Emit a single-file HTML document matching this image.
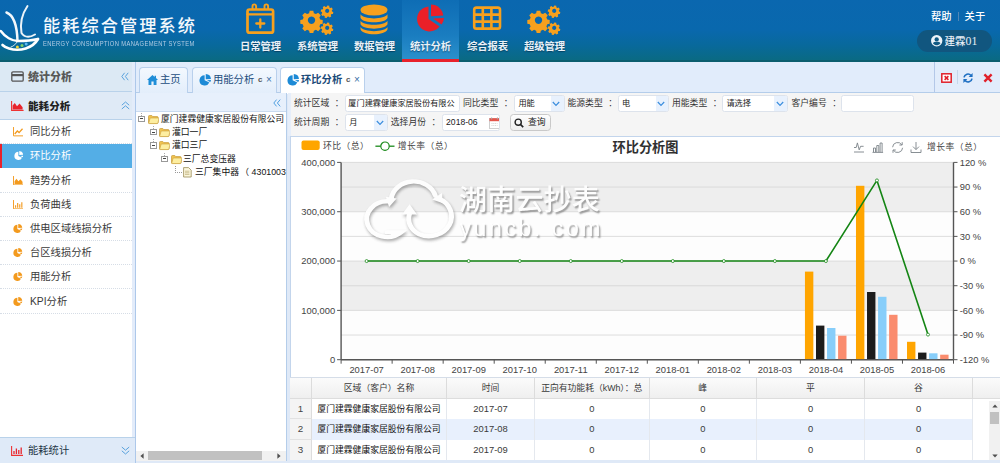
<!DOCTYPE html>
<html lang="zh-CN">
<head>
<meta charset="utf-8">
<title>能耗综合管理系统</title>
<style>
*{box-sizing:border-box;margin:0;padding:0}
html,body{width:1000px;height:463px;overflow:hidden;background:#fff}
body{font-family:"Liberation Sans","Noto Sans CJK SC",sans-serif;font-size:8.8px;color:#333;position:relative}
.abs{position:absolute}
#app{position:absolute;left:0;top:0;width:1000px;height:463px;overflow:hidden;background:#dfe9f7}
/* header */
#hdr{position:absolute;left:0;top:0;width:1000px;height:62px;background:linear-gradient(#0a67af 0%,#0968ad 50%,#08699c 75%,#0a6a83 100%);border-bottom:2px solid #0b5d6e}
#title{position:absolute;left:43px;top:14px;color:#f4f8fc;font-size:17.2px;letter-spacing:2.05px;white-space:nowrap;line-height:24px;font-weight:500}
#subtitle{position:absolute;left:43px;top:38.6px;color:#b4cde3;font-size:7.4px;letter-spacing:0.5px;white-space:nowrap;line-height:10px;font-family:"Liberation Sans",sans-serif;transform-origin:0 0;transform:scaleX(.782)}
.nav{position:absolute;top:0;width:57px;height:60px;text-align:center}
.nav.on{background:linear-gradient(#0e6db5 0%,#1a7dc0 60%,#2a90cc 100%);border-bottom:3px solid #e8212b;height:62px}
.nav svg{position:absolute;left:0;top:0}
.nav span{position:absolute;left:-10px;right:-10px;top:39.5px;line-height:14px;font-size:10.3px;font-weight:bold;color:#e9f1f8;white-space:nowrap;text-shadow:0 1px 1px rgba(0,40,70,.6)}
#help{position:absolute;left:931px;top:10px;font-size:10.3px;color:#fff;line-height:14px;white-space:nowrap;font-weight:500}
#help i{display:inline-block;width:1px;height:9px;background:#4f86b6;margin:0 6px 0 6px;vertical-align:-1px}
#user{position:absolute;left:917px;top:30px;width:75px;height:22px;border-radius:11px;background:#11567f;color:#e6eef5;font-size:10.6px;line-height:22px;white-space:nowrap}
#user span{position:absolute;left:27.6px;top:0;font-size:10.5px;font-weight:500}
#user span b{font-family:"Liberation Serif",serif;font-size:11.8px;font-weight:normal}
/* sidebar */
#side{position:absolute;left:0;top:62px;width:136px;height:401px;background:linear-gradient(90deg,#fff 0,#fff 132px,#e3ecfa 132px);border-right:1px solid #adc8ea}
.sh{position:absolute;left:0;width:132px;background:#dbe8f3;border-bottom:1px solid #b9d2ea;font-weight:bold;color:#444}
.sh b{position:absolute;left:28px;top:1px;font-size:11px;white-space:nowrap}
.si{position:absolute;left:0;width:132px;height:24.2px;border-bottom:1px dotted #d6dde6;font-size:10.3px;line-height:23.6px;color:#3a3a3a}
.si span{position:absolute;left:30px;top:0;white-space:nowrap}
.si.on{background:#54aee6;color:#fff;border-left:2px solid #e8212b;border-bottom:none}
.si svg{position:absolute;left:12px;top:6.5px}
/* tabs */
#tabs{position:absolute;left:136px;top:62px;width:864px;height:31px;background:#e1ecfb;border-bottom:1px solid #b4cdea}
.tab{position:absolute;top:5px;height:26px;border:1px solid #b9d0ec;border-bottom:none;border-radius:4px 4px 0 0;background:linear-gradient(#f3f8fe,#e3eefb);font-size:10.3px;line-height:24px;color:#1d4d7c;white-space:nowrap}
.tab.on{background:#fff;height:27px;font-weight:bold;color:#1b4a78}
.tab span{position:absolute;top:0}
.tab svg{position:absolute}
.tab em{position:absolute;top:0;font-style:normal;font-size:8px;color:#555;font-weight:bold}

/* tree */
#tree{position:absolute;left:136px;top:93px;width:151px;height:368px;background:#fff;border-right:1px solid #b4cdea}
#treehd{position:absolute;left:0;top:0;width:150px;height:19px;background:#e7f0fc;border-bottom:1px solid #c9daef}
#treebody{position:absolute;left:0;top:19px;width:150px;height:339px;overflow:hidden}
.tr{position:absolute;left:0;height:13.2px;width:150px;line-height:13.2px;font-size:8.8px;color:#111;white-space:nowrap}
.tr span{position:absolute;top:0}
.tr .ex{position:absolute;top:3px;width:6.6px;height:6.2px;border:1px solid #999;background:#fff}
.tr .ex:after{content:"";position:absolute;left:1px;top:1.5px;width:2.6px;height:1px;background:#444}
.tr .ex:before{content:"";position:absolute;left:1.7px;top:-4px;height:3px;border-left:1px dotted #aaa}
.tr .ln{position:absolute;left:39px;top:0;width:7px;height:7px;border-left:1px dotted #999;border-bottom:1px dotted #999}
.tr .fo{position:absolute;top:1px;width:11px;height:11px}
#hscroll{position:absolute;left:0;top:358px;width:150px;height:10px;background:#f1f1f1}
/* filter */
#filter{position:absolute;left:288px;top:93px;width:712px;height:43px;background:#f5f5f5;border-left:3px solid #e6eefa}
#filter label{position:absolute;font-size:8.8px;line-height:15px;color:#333;white-space:nowrap}
#filter label u{text-decoration:none;margin-left:5.6px;margin-right:-5.6px}
.inp{position:absolute;height:17.3px;border:1px solid #dde3ec;border-radius:2.5px;background:#fff;font-size:8.2px;line-height:15.3px;color:#222;white-space:nowrap;overflow:hidden}
.inp span{position:absolute;left:3px;top:0}
.inp.sel svg{position:absolute;right:3.4px;top:5.2px;width:8px;height:6px}
.inp.sel i{position:absolute;right:0;top:0;width:12.5px;height:100%;background:#e8f1fd}
#qbtn{position:absolute;left:219px;top:20.8px;width:41.3px;height:17.6px;border:1px solid #c9c9c9;border-radius:3.5px;background:linear-gradient(#fdfdfd,#eeeeee);font-size:8.8px;line-height:15.5px;color:#222}
#qbtn span{position:absolute;left:17px;top:0;white-space:nowrap}

/* chart */
#chartp{position:absolute;left:290px;top:135.5px;width:710px;height:241px;background:#fff;border-left:1px solid #c3d5ec;border-top:1px solid #c3d5ec;overflow:hidden}
#chartp>svg#chart{left:0!important;top:-0.5px!important}
#wm{position:absolute;left:0;top:0;width:400px;height:120px;opacity:.92}
.wmt{position:absolute;color:#fff;white-space:nowrap;font-weight:500;text-shadow:1.5px 2px 1.5px rgba(90,90,90,.6)}
/* grid */
#grid{position:absolute;left:290px;top:377px;width:710px;height:83px;background:#fff;overflow:hidden;border-top:1px solid #d5dde8}
#ghd{position:absolute;left:0;top:0;width:710px;height:21px;background:linear-gradient(#fbfbfb,#efefef);border-bottom:1px solid #ddd}
#ghd .gc{line-height:21.5px;height:21px;border-right:1px solid #dcdcdc;color:#3a3a3a}
.gr{position:absolute;left:0;width:683px;height:20.7px;background:#fff}
.gr.alt{background:#e8f0fd}
.gc{position:absolute;top:0;height:20.7px;line-height:20.2px;text-align:center;font-size:8.8px;white-space:nowrap;border-right:1px solid #e4e8ee;overflow:hidden;color:#111}
.gr .gc{font-size:9.4px;color:#3a3a3a}
.gr .gc.cj{font-size:8.8px;color:#111}
.gc.gn{font-size:9.8px!important;color:#444;font-family:"Liberation Sans",sans-serif;background:#f4f4f4;border-right:1px solid #ddd;border-bottom:1px solid #e2e2e2}
#vscroll{position:absolute;left:699px;top:23px;width:11px;height:60px;background:#f1f1f1}
</style>
</head>
<body>
<div id="app">

<!-- ================= HEADER ================= -->
<div id="hdr">
  <svg class="abs" style="left:0;top:0" width="42" height="60" viewBox="0 0 42 60">
    <g fill="none" stroke="#fff" stroke-linecap="round">
      <path d="M6.5 12.5 C13 15,17 24,17.5 41" stroke-width="2.5" opacity=".95"/>
      <path d="M27.5 6 C22 14,20 24,21.5 33 C24 37,29 38,35 34.5" stroke-width="2" opacity=".92"/>
      <path d="M0.8 31 C5 37,12 41,18 41 C25 41,32 40.5,38 39" stroke-width="2.4"/>
      <path d="M38 39 C33 48,20 52,9 48.5 C6 47.5,3.5 46,2.5 45" stroke-width="2.6"/>
      <path d="M17.5 41 C16 44,14 46,11 47" stroke-width="1" opacity=".8"/>
    </g>
    <circle cx="17.4" cy="46.9" r="1.5" fill="#f4d63a"/>
    <circle cx="22" cy="45.5" r="1.5" fill="#7fd36a"/>
    <circle cx="26.2" cy="44" r="1.5" fill="#5db8f0"/>
  </svg>
  <div id="title">能耗综合管理系统</div>
  <div id="subtitle">ENERGY CONSUMPTION MANAGEMENT SYSTEM</div>

  <div class="nav" style="left:232px">
    <svg width="57" height="40" viewBox="0 0 57 40"><g fill="none" stroke="#f7a01d" stroke-width="2.7" stroke-linejoin="round" stroke-linecap="round"><rect x="15.5" y="9.5" width="25.6" height="23.2" rx="2"/><path d="M20.5 9 V6.2 a1.8 1.8 0 0 1 3.6 0 V9 M32.5 9 V6.2 a1.8 1.8 0 0 1 3.6 0 V9" stroke-width="1.9"/><path d="M15.5 14.3 H41" stroke-width="2.2"/><path d="M28.3 19.5 v8 M24.3 23.5 h8" stroke-width="2.3"/></g></svg>
    <span>日常管理</span></div>
  <div class="nav" style="left:289px">
    <svg width="57" height="40" viewBox="0 0 57 40"><use href="#gears"/></svg>
    <span>系统管理</span></div>
  <div class="nav" style="left:346px">
    <svg width="57" height="40" viewBox="0 0 57 40"><g fill="#f7a01d"><ellipse cx="28" cy="10" rx="13.5" ry="5.6"/><path d="M14.5 14.3 c3 5.5,24 5.5,27 0 v3.6 c-3 5.8,-24 5.8,-27 0z"/><path d="M14.5 20.7 c3 5.5,24 5.5,27 0 v3.6 c-3 5.8,-24 5.8,-27 0z"/><path d="M14.5 27.1 c3 5.5,24 5.5,27 0 v2.2 c-2 6.6,-25 6.6,-27 0z"/></g></svg>
    <span>数据管理</span></div>
  <div class="nav on" style="left:402px">
    <svg width="57" height="40" viewBox="0 0 57 40"><g fill="#ea2028"><path d="M26.5 6.5 A12.5 12.5 0 1 0 37.5 26.5 L26.5 19z"/><path d="M29 4.5 A12.5 12.5 0 0 1 41.3 15.6 L29 16.2z"/><path d="M31 18.6 L42 18 A12.5 12.5 0 0 1 39.6 24.6z"/></g></svg>
    <span>统计分析</span></div>
  <div class="nav" style="left:459px">
    <svg width="57" height="40" viewBox="0 0 57 40"><g fill="none" stroke="#f7a01d" stroke-width="2.6"><rect x="15.2" y="7.6" width="25.8" height="21" rx="2.2"/><path d="M15 14.6 H41 M15 21.6 H41 M23.8 8 V28.5 M32.4 8 V28.5"/></g></svg>
    <span>综合报表</span></div>
  <div class="nav" style="left:516px">
    <svg width="57" height="40" viewBox="0 0 57 40"><use href="#gears"/></svg>
    <span>超级管理</span></div>

  <div id="help">帮助<i></i>关于</div>
  <div id="user">
    <svg class="abs" style="left:14.3px;top:5.3px" width="11.4" height="11.4" viewBox="0 0 10 10"><circle cx="5" cy="5" r="5" fill="#eef4f9"/><circle cx="5" cy="3.9" r="1.9" fill="#115a83"/><path d="M1.7 7.2 C2.6 5.6,7.4 5.6,8.3 7.2 C7.2 8.6,6.2 9,5 9 C3.8 9,2.8 8.6,1.7 7.2z" fill="#115a83"/></svg>
    <span>建霖<b>01</b></span>
  </div>
</div>

<svg width="0" height="0" style="position:absolute">
  <defs>
    <g id="gear1"><path fill="#f7a01d" fill-rule="evenodd" d="M-1.9 -10 h3.8 l.6 2.6 l2.2 .9 l2.3 -1.4 l2.7 2.7 l-1.4 2.3 l.9 2.2 l2.6 .6 v3.8 l-2.6 .6 l-.9 2.2 l1.4 2.3 l-2.7 2.7 l-2.3 -1.4 l-2.2 .9 l-.6 2.6 h-3.8 l-.6 -2.6 l-2.2 -.9 l-2.3 1.4 l-2.7 -2.7 l1.4 -2.3 l-.9 -2.2 l-2.6 -.6 v-3.8 l2.6 -.6 l.9 -2.2 l-1.4 -2.3 l2.7 -2.7 l2.3 1.4 l2.2 -.9z M0 -3.9 a3.9 3.9 0 1 0 .01 0z"/></g>
    <g id="gears">
      <use href="#gear1" transform="translate(22.5 20.2) scale(.95)"/>
      <use href="#gear1" transform="translate(38.2 10.8) scale(.53) rotate(12)"/>
      <use href="#gear1" transform="translate(38.2 27.8) scale(.53) rotate(12)"/>
    </g>
  </defs>
</svg>

<!-- ================= SIDEBAR ================= -->
<div id="side">
  <div class="sh" style="top:0;height:29.5px;line-height:28.5px;background:#dce9f4;color:#585858">
    <svg class="abs" style="left:11px;top:9px" width="13" height="11" viewBox="0 0 13 11"><rect x=".8" y=".8" width="11.4" height="9.4" rx="1.2" fill="none" stroke="#555" stroke-width="1.3"/><rect x="1" y="3" width="11" height="2.2" fill="#555"/></svg>
    <b>统计分析</b>
    <svg class="abs" style="left:121px;top:10px" width="8" height="9" viewBox="0 0 8 9"><path d="M3.6 .8 L.8 4.5 L3.6 8.2 M7.2 .8 L4.4 4.5 L7.2 8.2" fill="none" stroke="#5aa2dc" stroke-width="1"/></svg>
  </div>
  <div class="sh" style="top:29.5px;height:28px;line-height:27px;background:#dfeaf6;color:#222">
    <svg class="abs" style="left:11px;top:9px" width="13" height="10" viewBox="0 0 13 10"><path d="M.6 0 V9.4 H12.6" fill="none" stroke="#e33" stroke-width="1.1"/><path d="M1.6 8.6 V4.5 L3.8 2 L6 5.2 L8.6 2.6 L11.6 6.2 V8.6z" fill="#e8252d"/></svg>
    <b style="font-size:10.6px">能耗分析</b>
    <svg class="abs" style="left:121px;top:9px" width="9" height="9" viewBox="0 0 9 9"><path d="M.8 4.2 L4.5 1 L8.2 4.2 M.8 8 L4.5 4.8 L8.2 8" fill="none" stroke="#5aa2dc" stroke-width="1"/></svg>
  </div>
  <div class="si" style="top:58.1px"><svg style="left:12.6px;top:7px" width="10.4" height="9.6" viewBox="0 0 12 11"><path d="M.6 0 V10.2 H12" fill="none" stroke="#f39a1e" stroke-width="1.1"/><path d="M2 8 L5 4.6 L7 6.4 L11 2" fill="none" stroke="#f39a1e" stroke-width="1.5"/></svg><span>同比分析</span></div>
  <div class="si on" style="top:82.3px"><svg style="left:11.6px;top:7.2px" width="9.6" height="9.6" viewBox="0 0 11 11"><use href="#pie" fill="#fff"/></svg><span style="left:28px">环比分析</span></div>
  <div class="si" style="top:106.5px"><svg style="left:12.6px;top:7px" width="10.4" height="9.6" viewBox="0 0 12 11"><path d="M.6 0 V10.2 H12" fill="none" stroke="#f39a1e" stroke-width="1.1"/><path d="M1.8 9.2 V6 L4 3 L6.2 6 L8.6 3.6 L11 6.6 V9.2z" fill="#f39a1e"/></svg><span>趋势分析</span></div>
  <div class="si" style="top:130.7px"><svg style="left:12.6px;top:7px" width="10.4" height="9.6" viewBox="0 0 12 11"><path d="M.6 0 V10.2 H12" fill="none" stroke="#f39a1e" stroke-width="1.1"/><path d="M3 9 V6 M5.4 9 V3.5 M7.8 9 V5 M10.2 9 V2.5" fill="none" stroke="#f39a1e" stroke-width="1.3"/></svg><span>负荷曲线</span></div>
  <div class="si" style="top:154.9px"><svg style="left:13px;top:7.2px" width="9.6" height="9.6" viewBox="0 0 11 11"><use href="#pie" fill="#f39a1e"/></svg><span>供电区域线损分析</span></div>
  <div class="si" style="top:179.1px"><svg style="left:13px;top:7.2px" width="9.6" height="9.6" viewBox="0 0 11 11"><use href="#pie" fill="#f39a1e"/></svg><span>台区线损分析</span></div>
  <div class="si" style="top:203.3px"><svg style="left:13px;top:7.2px" width="9.6" height="9.6" viewBox="0 0 11 11"><use href="#pie" fill="#f39a1e"/></svg><span>用能分析</span></div>
  <div class="si" style="top:227.5px"><svg style="left:13px;top:7.2px" width="9.6" height="9.6" viewBox="0 0 11 11"><use href="#pie" fill="#f39a1e"/></svg><span>KPI分析</span></div>
  <div class="sh" style="top:375px;width:135px;height:26px;line-height:24px;background:#dfeaf8;border-top:1px solid #b9d2ea;border-bottom:none;font-weight:normal">
    <svg class="abs" style="left:11px;top:8px" width="12" height="10" viewBox="0 0 12 10"><path d="M.6 0 V9.4 H12" fill="none" stroke="#e33" stroke-width="1.1"/><path d="M3 8 V5 M5.4 8 V2.5 M7.8 8 V4 M10.2 8 V1.5" fill="none" stroke="#e8252d" stroke-width="1.3"/></svg>
    <b style="font-size:10.3px;font-weight:normal;color:#234">能耗统计</b>
    <svg class="abs" style="left:121px;top:8px" width="9" height="9" viewBox="0 0 9 9"><path d="M.8 1 L4.5 4.2 L8.2 1 M.8 4.8 L4.5 8 L8.2 4.8" fill="none" stroke="#5aa2dc" stroke-width="1"/></svg>
  </div>
</div>
<svg width="0" height="0" style="position:absolute"><defs>
  <g id="pie"><path d="M5 1 A4.6 4.6 0 1 0 9.2 7.6 L5 5.6z"/><path d="M6 0 A4.8 4.8 0 0 1 10.6 4.4 L6 4.6z"/><path d="M7 5.6 L10.7 5.3 A4.8 4.8 0 0 1 9.9 7.2z"/></g>
</defs></svg>

<!-- ================= TABS ================= -->
<div id="tabs">
  <div class="tab" style="left:3px;width:49px">
    <svg style="left:7px;top:6.5px" width="11" height="10" viewBox="0 0 11 10"><path d="M5.5 0 L7.6 1.9 V.8 H9 V3.1 L11 4.9 H9.5 V10 H6.6 V6.6 H4.4 V10 H1.5 V4.9 H0z" fill="#1f8ed8"/></svg>
    <span style="left:20px">主页</span></div>
  <div class="tab" style="left:56px;width:85px">
    <svg style="left:6px;top:5.5px" width="12.4" height="12.4" viewBox="0 0 11 11"><use href="#pie" fill="#1d8ad6"/></svg>
    <span style="left:20px">用能分析</span><em style="left:65px">c</em><em style="left:73px;font-size:10px;font-weight:normal;color:#3a6ea5">×</em></div>
  <div class="tab on" style="left:144px;width:85px">
    <svg style="left:6px;top:5.5px" width="12.4" height="12.4" viewBox="0 0 11 11"><use href="#pie" fill="#1d8ad6"/></svg>
    <span style="left:20px">环比分析</span><em style="left:65px">c</em><em style="left:73px;font-size:10px;font-weight:normal;color:#3a6ea5">×</em></div>
  <div class="abs" style="left:798px;top:0;width:1px;height:30px;background:#b4c8e8"></div>
  <svg class="abs" style="left:805px;top:11px" width="11" height="10" viewBox="0 0 11 10"><rect x=".8" y=".8" width="9.4" height="8.4" fill="#fff" stroke="#e0202a" stroke-width="1.5"/><path d="M3.6 3.1 L7.4 6.9 M7.4 3.1 L3.6 6.9" stroke="#e0202a" stroke-width="1.5"/></svg>
  <div class="abs" style="left:821px;top:8px;width:1px;height:14px;background:#c5d6ea"></div>
  <svg class="abs" style="left:827px;top:11px" width="10" height="10" viewBox="0 0 10 10"><g fill="none" stroke="#1e6fc2" stroke-width="1.6"><path d="M1 4.4 A4 4 0 0 1 8 2.4"/><path d="M9 5.6 A4 4 0 0 1 2 7.6"/></g><path d="M9.6 0 V4 H5.6z M.4 10 V6 H4.4z" fill="#1e6fc2"/></svg>
  <svg class="abs" style="left:847px;top:11px" width="10" height="10" viewBox="0 0 10 10"><path d="M1.4 1.4 L8.6 8.6 M8.6 1.4 L1.4 8.6" stroke="#e0202a" stroke-width="2.4"/></svg>
</div>

<!-- ================= TREE PANEL ================= -->
<div id="tree">
  <div id="treehd"><svg class="abs" style="left:137px;top:5.5px" width="8" height="8" viewBox="0 0 8 8"><path d="M3.6 .6 L.8 4 L3.6 7.4 M7.2 .6 L4.4 4 L7.2 7.4" fill="none" stroke="#4f9fe0" stroke-width="1"/></svg></div>
  <div id="treebody">
    <div class="tr" style="top:0.6px"><i class="ex" style="left:2.3px"></i><svg class="fo" style="left:12.3px"><use href="#folder"/></svg><span style="left:25px">厦门建霖健康家居股份有限公司</span></div>
    <div class="tr" style="top:14px"><i class="ex" style="left:14px"></i><svg class="fo" style="left:23.2px"><use href="#folder"/></svg><span style="left:36px">灌口一厂</span></div>
    <div class="tr" style="top:27.4px"><i class="ex" style="left:14px"></i><svg class="fo" style="left:23.2px"><use href="#folder"/></svg><span style="left:36px">灌口三厂</span></div>
    <div class="tr" style="top:40.8px"><i class="ex" style="left:25.3px"></i><svg class="fo" style="left:34.8px"><use href="#folder"/></svg><span style="left:47px">三厂总变压器</span></div>
    <div class="tr" style="top:54.2px"><i class="ln"></i><svg class="fo" style="left:47px;width:9px"><use href="#doc"/></svg><span style="left:59px">三厂集中器<b style="font-weight:normal;margin:0 2.6px 0 1.2px">（</b>4301003</span></div>
  </div>
  <div id="hscroll">
    <svg class="abs" style="left:4px;top:2px" width="4" height="6" viewBox="0 0 4 6"><path d="M3.6 .3 V5.7 L.4 3z" fill="#505050"/></svg>
    <div class="abs" style="left:12px;top:0;width:114px;height:9px;background:#c1c1c1"></div>
    <svg class="abs" style="left:141px;top:2px" width="4" height="6" viewBox="0 0 4 6"><path d="M.4 .3 V5.7 L3.6 3z" fill="#505050"/></svg>
  </div>
</div>
<svg width="0" height="0" style="position:absolute"><defs>
  <g id="folder"><path d="M.5 2.4 q0 -.9 .9 -.9 h2.4 l1 1.1 h4.4 q.9 0 .9 .9 v5 q0 .9 -.9 .9 h-7.8 q-.9 0 -.9 -.9z" fill="#f0c24e" stroke="#c49a3a" stroke-width=".7"/><path d="M.7 9.2 L2 4.6 q.2 -.6 .9 -.6 h7.4 q.8 0 .6 .7 L9.8 9.2 q-.2 .4 -.8 .4 h-7.6 q-.8 0 -.7 -.4z" fill="#fdeea0" stroke="#c9a040" stroke-width=".6"/></g>
  <g id="doc"><path d="M.6 .6 h5 l2.600000000000001 2.600000000000001 v6.800000000000001 h-7.6z" fill="#fbf7dc" stroke="#9a8c55" stroke-width=".8"/><path d="M2 4.2 h4.4 M2 5.800000000000001 h4.4 M2 7.4 h4.4" stroke="#b8a972" stroke-width=".7"/></g>
</defs></svg>

<!-- ================= FILTER ================= -->
<div id="filter">
  <label style="left:3px;top:2.6px">统计区域<u>：</u></label>
  <div class="inp" style="left:54.3px;top:2px;width:114.7px"><span style="left:2px">厦门建霖健康家居股份有限公</span></div>
  <label style="left:172px;top:2.6px">同比类型<u>：</u></label>
  <div class="inp sel" style="left:223.4px;top:2px;width:50.4px"><span>用能</span><i></i><svg><use href="#chev"/></svg></div>
  <label style="left:276.5px;top:2.6px">能源类型<u>：</u></label>
  <div class="inp sel" style="left:327px;top:2px;width:51.3px"><span>电</span><i></i><svg><use href="#chev"/></svg></div>
  <label style="left:381px;top:2.6px">用能类型<u>：</u></label>
  <div class="inp sel" style="left:431.4px;top:2px;width:65.6px"><span>请选择</span><i></i><svg><use href="#chev"/></svg></div>
  <label style="left:500.5px;top:2.6px">客户编号<u>：</u></label>
  <div class="inp" style="left:550.4px;top:2px;width:73px"></div>

  <label style="left:3px;top:21.6px">统计周期<u>：</u></label>
  <div class="inp sel" style="left:54.3px;top:21px;width:42.7px;height:17.2px"><span>月</span><i></i><svg><use href="#chev"/></svg></div>
  <label style="left:99.8px;top:21.6px">选择月份<u>：</u></label>
  <div class="inp" style="left:150.6px;top:21px;width:58.4px;height:17.2px"><span style="font-family:'Liberation Sans',sans-serif;font-size:8.6px;left:3.5px">2018-06</span>
    <svg class="abs" style="left:46.5px;top:2.4px;width:11px;height:12px" viewBox="0 0 11 12"><rect x=".5" y="1.5" width="10" height="10" fill="#fff" stroke="#c4c4c4" stroke-width=".8"/><rect x=".5" y="1.2" width="10" height="3" fill="#e4554b"/><path d="M2.6 .4 v2 M8.4 .4 v2" stroke="#aaa" stroke-width="1"/><path d="M2.5 6.5 h6 M2.5 8.5 h6" stroke="#ccc" stroke-width=".8" stroke-dasharray="1 .8"/></svg></div>
  <div id="qbtn"><svg class="abs" style="left:3px;top:3.6px" width="10" height="10" viewBox="0 0 10 10"><circle cx="4.2" cy="4.2" r="3.1" fill="none" stroke="#222" stroke-width="1.4"/><path d="M6.5 6.5 L9.2 9.2" stroke="#222" stroke-width="1.7"/></svg><span>查询</span></div>
</div>
<svg width="0" height="0" style="position:absolute"><defs>
  <g id="chev"><path d="M.8 1 L4 4.4 L7.2 1" fill="none" stroke="#3b8ede" stroke-width="1.2"/></g>
</defs></svg>

<!-- ================= CHART ================= -->
<div id="chartp">
<svg id="chart" width="709" height="241" viewBox="0 0 709 241" style="position:absolute;left:0;top:0;font-family:'Liberation Sans','Noto Sans CJK SC',sans-serif">
<rect x="50.1" y="26.4" width="612.4" height="49.32" fill="#eeeeee"/>
<rect x="50.1" y="75.72" width="612.4" height="49.32" fill="#fdfdfd"/>
<rect x="50.1" y="125.05" width="612.4" height="49.32" fill="#eeeeee"/>
<rect x="50.1" y="174.38" width="612.4" height="49.32" fill="#fdfdfd"/>
<path d="M50.1 26.4 H662.5" stroke="#d4d4d4" stroke-width="0.8"/>
<path d="M50.1 51.06 H662.5" stroke="#d4d4d4" stroke-width="0.8"/>
<path d="M50.1 75.72 H662.5" stroke="#d4d4d4" stroke-width="0.8"/>
<path d="M50.1 100.39 H662.5" stroke="#d4d4d4" stroke-width="0.8"/>
<path d="M50.1 125.05 H662.5" stroke="#d4d4d4" stroke-width="0.8"/>
<path d="M50.1 149.71 H662.5" stroke="#d4d4d4" stroke-width="0.8"/>
<path d="M50.1 174.38 H662.5" stroke="#d4d4d4" stroke-width="0.8"/>
<path d="M50.1 199.04 H662.5" stroke="#d4d4d4" stroke-width="0.8"/>
<path d="M50.1 223.7 H662.5" stroke="#d4d4d4" stroke-width="0.8"/>
<path d="M50.1 26.4 V223.7" stroke="#555" stroke-width="1.4"/>
<path d="M662.5 26.4 V223.7" stroke="#555" stroke-width="1.4"/>
<path d="M50.1 223.7 H662.5" stroke="#555" stroke-width="1.4"/>
<path d="M46.1 26.4 H50.1" stroke="#555" stroke-width="1"/>
<text x="44.1" y="29.6" text-anchor="end" font-size="9.4" fill="#444">400,000</text>
<path d="M46.1 75.72 H50.1" stroke="#555" stroke-width="1"/>
<text x="44.1" y="78.92" text-anchor="end" font-size="9.4" fill="#444">300,000</text>
<path d="M46.1 125.05 H50.1" stroke="#555" stroke-width="1"/>
<text x="44.1" y="128.25" text-anchor="end" font-size="9.4" fill="#444">200,000</text>
<path d="M46.1 174.38 H50.1" stroke="#555" stroke-width="1"/>
<text x="44.1" y="177.57" text-anchor="end" font-size="9.4" fill="#444">100,000</text>
<path d="M46.1 223.7 H50.1" stroke="#555" stroke-width="1"/>
<text x="44.1" y="226.9" text-anchor="end" font-size="9.4" fill="#444">0</text>
<path d="M662.5 26.4 H666.5" stroke="#555" stroke-width="1"/>
<text x="668.7" y="29.6" font-size="9.4" fill="#444">120 %</text>
<path d="M662.5 51.06 H666.5" stroke="#555" stroke-width="1"/>
<text x="668.7" y="54.26" font-size="9.4" fill="#444">90 %</text>
<path d="M662.5 75.72 H666.5" stroke="#555" stroke-width="1"/>
<text x="668.7" y="78.92" font-size="9.4" fill="#444">60 %</text>
<path d="M662.5 100.39 H666.5" stroke="#555" stroke-width="1"/>
<text x="668.7" y="103.59" font-size="9.4" fill="#444">30 %</text>
<path d="M662.5 125.05 H666.5" stroke="#555" stroke-width="1"/>
<text x="668.7" y="128.25" font-size="9.4" fill="#444">0 %</text>
<path d="M662.5 149.71 H666.5" stroke="#555" stroke-width="1"/>
<text x="668.7" y="152.91" font-size="9.4" fill="#444">-30 %</text>
<path d="M662.5 174.38 H666.5" stroke="#555" stroke-width="1"/>
<text x="668.7" y="177.57" font-size="9.4" fill="#444">-60 %</text>
<path d="M662.5 199.04 H666.5" stroke="#555" stroke-width="1"/>
<text x="668.7" y="202.24" font-size="9.4" fill="#444">-90 %</text>
<path d="M662.5 223.7 H666.5" stroke="#555" stroke-width="1"/>
<text x="668.7" y="226.9" font-size="9.4" fill="#444">-120 %</text>
<text x="75.62" y="236.7" text-anchor="middle" font-size="9.4" fill="#444">2017-07</text>
<text x="126.65" y="236.7" text-anchor="middle" font-size="9.4" fill="#444">2017-08</text>
<text x="177.68" y="236.7" text-anchor="middle" font-size="9.4" fill="#444">2017-09</text>
<text x="228.72" y="236.7" text-anchor="middle" font-size="9.4" fill="#444">2017-10</text>
<text x="279.75" y="236.7" text-anchor="middle" font-size="9.4" fill="#444">2017-11</text>
<text x="330.78" y="236.7" text-anchor="middle" font-size="9.4" fill="#444">2017-12</text>
<text x="381.82" y="236.7" text-anchor="middle" font-size="9.4" fill="#444">2018-01</text>
<text x="432.85" y="236.7" text-anchor="middle" font-size="9.4" fill="#444">2018-02</text>
<text x="483.88" y="236.7" text-anchor="middle" font-size="9.4" fill="#444">2018-03</text>
<text x="534.92" y="236.7" text-anchor="middle" font-size="9.4" fill="#444">2018-04</text>
<text x="585.95" y="236.7" text-anchor="middle" font-size="9.4" fill="#444">2018-05</text>
<text x="636.98" y="236.7" text-anchor="middle" font-size="9.4" fill="#444">2018-06</text>
<path d="M50.1 223.7 V227.7" stroke="#555" stroke-width="1"/>
<path d="M101.13 223.7 V227.7" stroke="#555" stroke-width="1"/>
<path d="M152.17 223.7 V227.7" stroke="#555" stroke-width="1"/>
<path d="M203.2 223.7 V227.7" stroke="#555" stroke-width="1"/>
<path d="M254.23 223.7 V227.7" stroke="#555" stroke-width="1"/>
<path d="M305.27 223.7 V227.7" stroke="#555" stroke-width="1"/>
<path d="M356.3 223.7 V227.7" stroke="#555" stroke-width="1"/>
<path d="M407.33 223.7 V227.7" stroke="#555" stroke-width="1"/>
<path d="M458.37 223.7 V227.7" stroke="#555" stroke-width="1"/>
<path d="M509.4 223.7 V227.7" stroke="#555" stroke-width="1"/>
<path d="M560.43 223.7 V227.7" stroke="#555" stroke-width="1"/>
<path d="M611.47 223.7 V227.7" stroke="#555" stroke-width="1"/>
<path d="M662.5 223.7 V227.7" stroke="#555" stroke-width="1"/>
<rect x="513.94" y="135.6" width="8.4" height="87.5" fill="#ffa500"/>
<rect x="524.99" y="189.6" width="8.4" height="33.5" fill="#1c1c1c"/>
<rect x="536.04" y="192" width="8.4" height="31.1" fill="#87cefa"/>
<rect x="547.09" y="199.7" width="8.4" height="23.4" fill="#fa8c6e"/>
<rect x="564.98" y="49.8" width="8.4" height="173.3" fill="#ffa500"/>
<rect x="576.02" y="156" width="8.4" height="67.1" fill="#1c1c1c"/>
<rect x="587.08" y="160.8" width="8.4" height="62.3" fill="#87cefa"/>
<rect x="598.12" y="178.8" width="8.4" height="44.3" fill="#fa8c6e"/>
<rect x="616.01" y="205.8" width="8.4" height="17.3" fill="#ffa500"/>
<rect x="627.06" y="216.6" width="8.4" height="6.5" fill="#1c1c1c"/>
<rect x="638.11" y="217.3" width="8.4" height="5.8" fill="#87cefa"/>
<rect x="649.16" y="218.7" width="8.4" height="4.4" fill="#fa8c6e"/>
<polyline fill="none" stroke="#148514" stroke-width="1.6" stroke-linejoin="round" points="75.62,125.05 126.65,125.05 177.68,125.05 228.72,125.05 279.75,125.05 330.78,125.05 381.82,125.05 432.85,125.05 483.88,125.05 534.92,125.05 585.95,44.4 636.98,198.6"/>
<circle cx="75.62" cy="125.05" r="1.5" fill="#fff" stroke="#1a8a1a" stroke-width="0.8"/>
<circle cx="126.65" cy="125.05" r="1.5" fill="#fff" stroke="#1a8a1a" stroke-width="0.8"/>
<circle cx="177.68" cy="125.05" r="1.5" fill="#fff" stroke="#1a8a1a" stroke-width="0.8"/>
<circle cx="228.72" cy="125.05" r="1.5" fill="#fff" stroke="#1a8a1a" stroke-width="0.8"/>
<circle cx="279.75" cy="125.05" r="1.5" fill="#fff" stroke="#1a8a1a" stroke-width="0.8"/>
<circle cx="330.78" cy="125.05" r="1.5" fill="#fff" stroke="#1a8a1a" stroke-width="0.8"/>
<circle cx="381.82" cy="125.05" r="1.5" fill="#fff" stroke="#1a8a1a" stroke-width="0.8"/>
<circle cx="432.85" cy="125.05" r="1.5" fill="#fff" stroke="#1a8a1a" stroke-width="0.8"/>
<circle cx="483.88" cy="125.05" r="1.5" fill="#fff" stroke="#1a8a1a" stroke-width="0.8"/>
<circle cx="534.92" cy="125.05" r="1.5" fill="#fff" stroke="#1a8a1a" stroke-width="0.8"/>
<circle cx="585.95" cy="44.4" r="1.5" fill="#fff" stroke="#1a8a1a" stroke-width="0.8"/>
<circle cx="636.98" cy="198.6" r="1.5" fill="#fff" stroke="#1a8a1a" stroke-width="0.8"/>
<rect x="10.5" y="4.4" width="18.2" height="9.6" rx="2" fill="#ffa500"/>
<text x="32" y="13.4" font-size="8.8" letter-spacing="0.45" fill="#444">环比（总）</text>
<path d="M84.4 10.2 H103.5" stroke="#1a8a1a" stroke-width="1.3"/>
<circle cx="94" cy="10.2" r="4.2" fill="#fff" stroke="#1a8a1a" stroke-width="1.2"/>
<text x="106.7" y="13.4" font-size="8.8" letter-spacing="0.45" fill="#444">增长率（总）</text>
<text x="354.5" y="16.3" text-anchor="middle" font-size="13.2" font-weight="bold" fill="#303030">环比分析图</text>
<g fill="none" stroke="#7a8288" stroke-width="0.9">
<path d="M563 11.5 h2.2 l1.2 -4.6 l1.8 7 l1.4 -3.6 h3 M563 16 h10"/>
<path d="M582.5 16 v-4 h2 v4 M585.8 16 v-6.5 h2 v6.5 M589.1 16 v-9 h2 v9 M581.5 16.4 h10.6"/>
<path d="M601.6 11.2 a5 5 0 0 1 9.2 -2.4 M611.6 11.8 a5 5 0 0 1 -9.2 2.4"/><path d="M611.2 6.2 v2.8 h-2.8 M602 16.8 v-2.8 h2.8"/>
<path d="M625 6 v7.4 M622 10.6 l3 3 l3 -3 M620 13.5 v3 h10 v-3"/>
</g>
<text x="636" y="14.2" font-size="8.8" letter-spacing="0.45" fill="#444">增长率（总）</text>
</svg>
  <div id="wm">
    <svg class="abs" style="left:69.3px;top:39.5px;filter:drop-shadow(1.5px 2px 1.5px rgba(90,90,90,.55))" width="107.7" height="67.7" viewBox="0 0 100 72" preserveAspectRatio="none">
      <g fill="none" stroke="#fff" stroke-width="4.6" stroke-linecap="round">
        <path d="M27 27 A19 19 0 1 0 38 60 H25"/>
        <path d="M29 24 A21 21 0 0 1 70 21"/>
        <path d="M73 24 A19 19 0 1 1 55 62 A19 19 0 0 1 46 40"/>
      </g>
      <path d="M46 30 L39 41 H53z M24 22 L34 24 L27 33z M76 18 L77 29 L67 25z" fill="#fff"/>
    </svg>
    <div class="wmt" style="left:168px;top:45.5px;font-size:28px;line-height:38px;letter-spacing:0.2px">湖南云抄表</div>
    <div class="wmt" style="left:168.5px;top:76.5px;font-size:23px;line-height:30px;letter-spacing:2.6px;font-family:'Liberation Sans',sans-serif">yuncb. com</div>
  </div>
</div>


<!-- ================= TABLE ================= -->
<div id="grid">
 <div id="ghd">
  <div class="gc" style="left:0px;width:22px"></div>
  <div class="gc" style="left:22px;width:135px">区域（客户）名称</div>
  <div class="gc" style="left:157px;width:88px">时间</div>
  <div class="gc" style="left:245px;width:114.5px">正向有功能耗（kWh）：总</div>
  <div class="gc" style="left:359.5px;width:107.5px">峰</div>
  <div class="gc" style="left:467px;width:108px">平</div>
  <div class="gc" style="left:575px;width:108px">谷</div>
 </div>
 <div class="gr" style="top:20.6px">
  <div class="gc gn" style="left:0px;width:22px">1</div>
  <div class="gc cj" style="left:22px;width:135px">厦门建霖健康家居股份有限公司</div>
  <div class="gc" style="left:157px;width:88px">2017-07</div>
  <div class="gc" style="left:245px;width:114.5px">0</div>
  <div class="gc" style="left:359.5px;width:107.5px">0</div>
  <div class="gc" style="left:467px;width:108px">0</div>
  <div class="gc" style="left:575px;width:108px">0</div>
 </div>
 <div class="gr alt" style="top:41.3px">
  <div class="gc gn" style="left:0px;width:22px">2</div>
  <div class="gc cj" style="left:22px;width:135px">厦门建霖健康家居股份有限公司</div>
  <div class="gc" style="left:157px;width:88px">2017-08</div>
  <div class="gc" style="left:245px;width:114.5px">0</div>
  <div class="gc" style="left:359.5px;width:107.5px">0</div>
  <div class="gc" style="left:467px;width:108px">0</div>
  <div class="gc" style="left:575px;width:108px">0</div>
 </div>
 <div class="gr" style="top:62.0px">
  <div class="gc gn" style="left:0px;width:22px">3</div>
  <div class="gc cj" style="left:22px;width:135px">厦门建霖健康家居股份有限公司</div>
  <div class="gc" style="left:157px;width:88px">2017-09</div>
  <div class="gc" style="left:245px;width:114.5px">0</div>
  <div class="gc" style="left:359.5px;width:107.5px">0</div>
  <div class="gc" style="left:467px;width:108px">0</div>
  <div class="gc" style="left:575px;width:108px">0</div>
 </div>
 <div id="vscroll">
  <svg class="abs" style="left:3px;top:2.8px" width="6" height="4" viewBox="0 0 6 4"><path d="M.3 3.6 H5.7 L3 .4z" fill="#505050"/></svg>
  <div class="abs" style="left:1px;top:10.5px;width:9px;height:12.5px;background:#c1c1c1"></div>
  <svg class="abs" style="left:3px;top:53px" width="6" height="4" viewBox="0 0 6 4"><path d="M.3 .4 H5.7 L3 3.6z" fill="#505050"/></svg>
 </div>
</div>



</div>
</body>
</html>
